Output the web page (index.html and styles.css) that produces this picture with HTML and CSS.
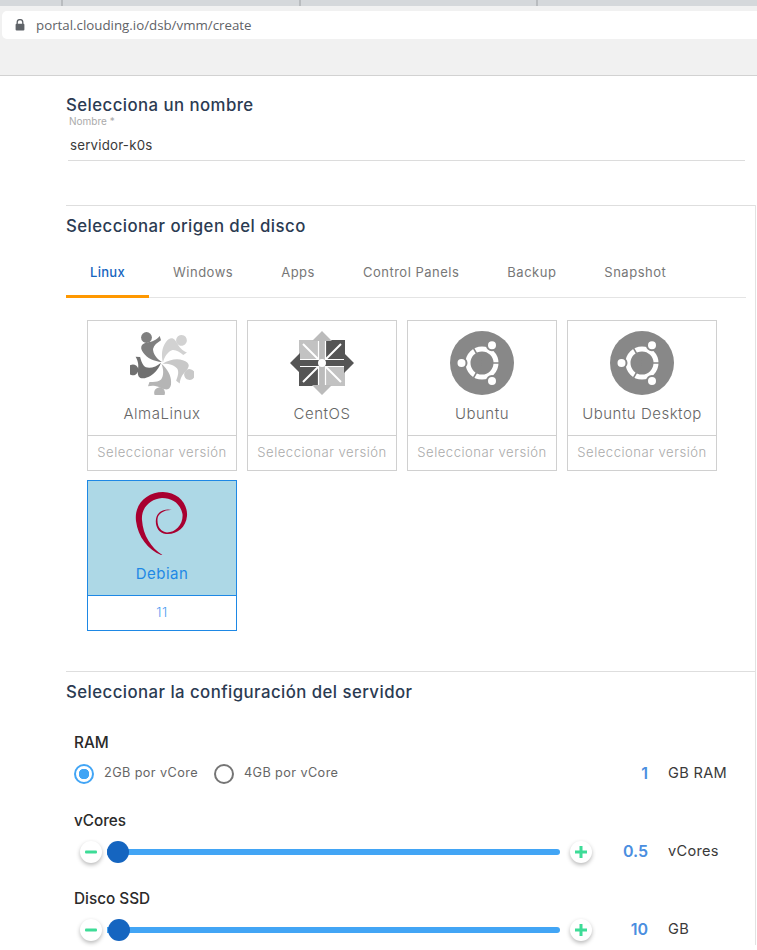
FILE: index.html
```html
<!DOCTYPE html>
<html lang="es">
<head>
<meta charset="utf-8">
<title>Clouding portal</title>
<link rel="stylesheet" href="styles.css">
</head>
<body>
<svg class="defs" width="0" height="0" aria-hidden="true">
  <defs>
    <g id="alma-fig">
      <circle cx="-15.500" cy="-25.500" r="5.400" fill="currentColor"/>
      <path fill="currentColor" d="M-2.300 -27 L-1 -22.700 C-5 -20 -8 -18 -9 -14 C-9 -9 -5 -4 0 -1 C-8 -1.500 -15 -5 -18.500 -10 C-21 -13 -21.500 -16 -20 -18 C-17 -21 -12 -20.500 -8 -22.500 C-6 -23.500 -4 -25 -2.300 -27 Z"/>
    </g>
    <g id="ubuntu-logo">
      <circle cx="32" cy="32" r="32" fill="#888"/>
      <circle cx="32" cy="32" r="14" fill="none" stroke="#fff" stroke-width="5"/>
      <path d="M32 32 L52 32 M32 32 L22 49.300 M32 32 L22 14.700" stroke="#888" stroke-width="1.600"/>
      <g fill="#fff" stroke="#888" stroke-width="2">
        <circle cx="42" cy="14.300" r="5"/>
        <circle cx="11.500" cy="32" r="5"/>
        <circle cx="42" cy="50" r="5"/>
      </g>
    </g>
    <g id="pm-minus"><rect x="5" y="9.500" width="12" height="3" rx="1" fill="#3ddc97"/></g>
    <g id="pm-plus"><path d="M5 11 H17 M11 5 V17" stroke="#3ddc97" stroke-width="3"/></g>
  </defs>
</svg>

<header class="browser">
  <div class="tabstrip">
    <span class="strip-tab strip-a"></span>
    <span class="strip-tab strip-b"></span>
    <span class="strip-tab strip-c"></span>
  </div>
  <div class="urlbar">
    <svg class="lock" viewBox="0 0 10 12" width="10" height="12"><path d="M2.200 5V3.400a2.800 2.800 0 0 1 5.600 0V5" fill="none" stroke="#5f6368" stroke-width="1.300"/><rect x="0.600" y="4.800" width="8.800" height="6.800" rx="1" fill="#5f6368"/></svg>
    <span class="url">portal.clouding.io/dsb/vmm/create</span>
  </div>
</header>

<main class="page">
  <section class="name-section">
    <h2 class="title">Selecciona un nombre</h2>
    <div class="field">
      <label class="field-label">Nombre *</label>
      <div class="field-value">servidor-k0s</div>
    </div>
  </section>

  <div class="bordered">
    <section class="disk-section">
      <h2 class="title">Seleccionar origen del disco</h2>
      <nav class="tabs">
        <a class="tab tab-active">Linux</a>
        <a class="tab">Windows</a>
        <a class="tab">Apps</a>
        <a class="tab">Control Panels</a>
        <a class="tab">Backup</a>
        <a class="tab">Snapshot</a>
      </nav>
      <div class="os-grid">
        <div class="os-card">
          <div class="os-main">
            <svg class="os-logo" viewBox="-32 -32 64 64">
              <use href="#alma-fig" color="#7f7f7f"/>
              <use href="#alma-fig" color="#d2d2d2" transform="rotate(72)"/>
              <use href="#alma-fig" color="#c8c8c8" transform="rotate(144)"/>
              <use href="#alma-fig" color="#b5b5b5" transform="rotate(216)"/>
              <use href="#alma-fig" color="#707070" transform="rotate(288)"/>
            </svg>
            <span class="os-name">AlmaLinux</span>
          </div>
          <div class="os-version">Seleccionar versión</div>
        </div>
        <div class="os-card">
          <div class="os-main">
            <svg class="os-logo" viewBox="-32 -32 64 64">
              <rect x="-23" y="-23" width="22" height="22" fill="#c2c2c2"/>
              <rect x="1" y="-23" width="22" height="22" fill="#555"/>
              <rect x="1" y="1" width="22" height="22" fill="#c2c2c2"/>
              <rect x="-23" y="1" width="22" height="22" fill="#555"/>
              <path d="M-2 -2 L-19 -19 M2 -2 L19 -19 M2 2 L19 19 M-2 2 L-19 19" stroke="#fff" stroke-width="2"/>
              <path d="M0 -32 L10 -22 H3.500 V-3 H-3.500 V-22 H-10 Z" fill="#bbb"/>
              <path d="M0 32 L10 22 H3.500 V3 H-3.500 V22 H-10 Z" fill="#bbb"/>
              <path d="M32 0 L22 10 V3.500 H3 V-3.500 H22 V-10 Z" fill="#555"/>
              <path d="M-32 0 L-22 10 V3.500 H-3 V-3.500 H-22 V-10 Z" fill="#555"/>
              <path d="M-3.500 -22 V-3.500 H-22 M3.500 -22 V-3.500 H22 M3.500 22 V3.500 H22 M-3.500 22 V3.500 H-22" fill="none" stroke="#fff" stroke-width="1.200"/>
              <circle r="4" fill="#fff"/>
            </svg>
            <span class="os-name">CentOS</span>
          </div>
          <div class="os-version">Seleccionar versión</div>
        </div>
        <div class="os-card">
          <div class="os-main">
            <svg class="os-logo" viewBox="0 0 64 64"><use href="#ubuntu-logo"/></svg>
            <span class="os-name">Ubuntu</span>
          </div>
          <div class="os-version">Seleccionar versión</div>
        </div>
        <div class="os-card">
          <div class="os-main">
            <svg class="os-logo" viewBox="0 0 64 64"><use href="#ubuntu-logo"/></svg>
            <span class="os-name">Ubuntu Desktop</span>
          </div>
          <div class="os-version">Seleccionar versión</div>
        </div>
        <div class="os-card os-card-selected">
          <div class="os-main">
            <svg class="os-logo" viewBox="50 15 64 64">
              <path fill="#a80030" d="M84 80 C70 76 58 62 56 45 C54 28 67 16 83 16 C98 16 108 28 107 40 C106 52 96 59 86 58 C78 57 75 50 76 43 C77 36 84 32 92 34 C85 33.500 78 37 77.500 43 C77 51 81 56 87 56.500 C96 56.500 103.500 48 102.500 38 C100 27 92 22 82 22 C70 23 61 32 62 44 C63 60 72 73 84 80 Z"/>
            </svg>
            <span class="os-name">Debian</span>
          </div>
          <div class="os-version">11</div>
        </div>
      </div>
    </section>

    <section class="config-section">
      <h2 class="title">Seleccionar la configuración del servidor</h2>
      <div class="config">
        <div class="config-label config-label-ram">RAM</div>
        <div class="config-row config-row-ram">
          <div class="control radios">
            <span class="radio radio-on"></span><span class="radio-text">2GB por vCore</span>
            <span class="radio"></span><span class="radio-text">4GB por vCore</span>
          </div>
          <span class="value">1</span><span class="unit">GB RAM</span>
        </div>

        <div class="config-label config-label-next">vCores</div>
        <div class="config-row">
          <div class="control slider">
            <span class="pm"><svg viewBox="0 0 22 22" width="22" height="22"><use href="#pm-minus"/></svg></span>
            <div class="track"><span class="thumb"></span></div>
            <span class="pm"><svg viewBox="0 0 22 22" width="22" height="22"><use href="#pm-plus"/></svg></span>
          </div>
          <span class="value">0.5</span><span class="unit">vCores</span>
        </div>

        <div class="config-label config-label-next">Disco SSD</div>
        <div class="config-row">
          <div class="control slider">
            <span class="pm"><svg viewBox="0 0 22 22" width="22" height="22"><use href="#pm-minus"/></svg></span>
            <div class="track"><span class="thumb thumb-disk"></span></div>
            <span class="pm"><svg viewBox="0 0 22 22" width="22" height="22"><use href="#pm-plus"/></svg></span>
          </div>
          <span class="value">10</span><span class="unit">GB</span>
        </div>
      </div>
    </section>
  </div>
</main>
</body>
</html>
```

FILE: styles.css
```css
html, body { margin: 0; padding: 0; height: 950px; overflow: hidden; background: #fff; }
body { font-family: Inter, "Liberation Sans", sans-serif; color: #2c3a4b; }
.defs { position: absolute; }

.browser { height: 75px; background: #f1f1f1; border-bottom: 1px solid #d2d2d2; }
.tabstrip { display: flex; height: 6px; background: #d5d8db; }
.strip-tab { border-right: 2px solid #b9bcbf; box-sizing: border-box; }
.strip-a { width: 63px; }
.strip-b { width: 238px; }
.strip-c { width: 237px; }
.urlbar { display: flex; align-items: center; height: 28px; margin: 5px 0 0 2px; background: #fff; border-radius: 5px 0 0 5px; }
.lock { margin-left: 13px; }
.url { margin-left: 11px; font: 13.300px/28px "Open Sans", sans-serif; color: #5f6368; }

.title { margin: 0; font-size: 16.800px; line-height: 20px; font-weight: 500; letter-spacing: 0.44px; color: #2b3b52; }

.name-section { margin-left: 66px; padding-top: 19px; height: 129px; box-sizing: border-box; }
.field { margin-left: 2px; width: 677px; border-bottom: 1px solid #dcdcdc; height: 45px; }
.field-label { display: block; margin-left: 1px; font-size: 10px; line-height: 12px; color: #aaa; }
.field-value { margin-left: 2px; margin-top: 8px; font-size: 13.300px; line-height: 20px; letter-spacing: 0.2px; color: #3a3a3a; }

.bordered { margin-left: 66px; width: 689px; border-right: 1px solid #e2e2e2; }
.disk-section { border-top: 1px solid #dedede; padding-top: 10px; height: 466px; box-sizing: border-box; }
.tabs { display: flex; margin-top: 15px; width: 680px; height: 46px; border-bottom: 1px solid #e4e4e4; }
.tab { padding: 0 24px; font-size: 13px; line-height: 42px; font-weight: 400; letter-spacing: 0.5px; color: #777; }
.tab-active { color: #1565c0; font-weight: 500; letter-spacing: 0.3px; border-bottom: 3px solid #ff9800; height: 44px; }
.os-grid { display: grid; grid-template-columns: repeat(4, 150px); gap: 9px 10px; margin: 22px 0 0 21px; }
.os-card { height: 151px; box-sizing: border-box; border: 1px solid #d0d0d0; display: flex; flex-direction: column; }
.os-main { display: flex; flex-direction: column; align-items: center; border-bottom: 1px solid #d0d0d0; padding-top: 10px; height: 104px; }
.os-logo { width: 64px; height: 64px; display: block; }
.os-name { margin-top: 8px; font-size: 15px; line-height: 22px; font-weight: 300; letter-spacing: 0.5px; color: #666; }
.os-version { flex: 1; text-align: center; font-size: 13.100px; line-height: 33px; font-weight: 300; letter-spacing: 0.5px; color: #aaa; }
.os-card-selected { border-color: #1e88e5; }
.os-card-selected .os-main { background: #add8e6; border-bottom-color: #1e88e5; }
.os-card-selected .os-name { color: #1e88e5; font-weight: 400; }
.os-card-selected .os-version { color: #4f9df0; }

.config-section { border-top: 1px solid #dedede; padding-top: 10px; }
.config { padding-left: 8px; }
.config-label { font-size: 15.300px; line-height: 18px; font-weight: 500; color: #2a2a2a; }
.config-label-ram { margin-top: 32px; }
.config-label-next { margin-top: 23px; }
.config-row { display: flex; align-items: center; height: 30px; margin-top: 7px; }
.config-row-ram { margin-top: 7px; }
.control { width: 518px; display: flex; align-items: center; }
.radio { width: 20px; height: 20px; box-sizing: border-box; border: 2px solid #757575; border-radius: 50%; }
.radio-on { border-color: #42a5f5; background: radial-gradient(circle, #42a5f5 0 5px, #fff 5.500px); }
.radio-text { margin: 0 16px 0 10px; padding-bottom: 2px; font-size: 12.700px; line-height: 18px; letter-spacing: 0.4px; color: #666; }
.slider { padding-left: 6px; box-sizing: border-box; }
.pm { flex: none; width: 22px; height: 22px; border-radius: 50%; background: #fff; box-shadow: 0 2px 4px rgba(0,0,0,0.28); display: block; }
.pm svg { display: block; }
.track { position: relative; flex: 1; height: 6px; margin: 0 10px 0 5px; background: #42a5f5; border-radius: 0 3px 3px 0; }
.thumb { position: absolute; left: 0; top: -8px; width: 22px; height: 22px; border-radius: 50%; background: #1565c0; }
.thumb-disk { left: 1px; }
.value { width: 56px; padding-bottom: 2px; text-align: right; font-size: 16px; font-weight: 600; color: #4a8ee0; }
.unit { margin-left: 20px; padding-bottom: 2px; font-size: 14.600px; letter-spacing: 0.3px; color: #3a3a3a; }
```
